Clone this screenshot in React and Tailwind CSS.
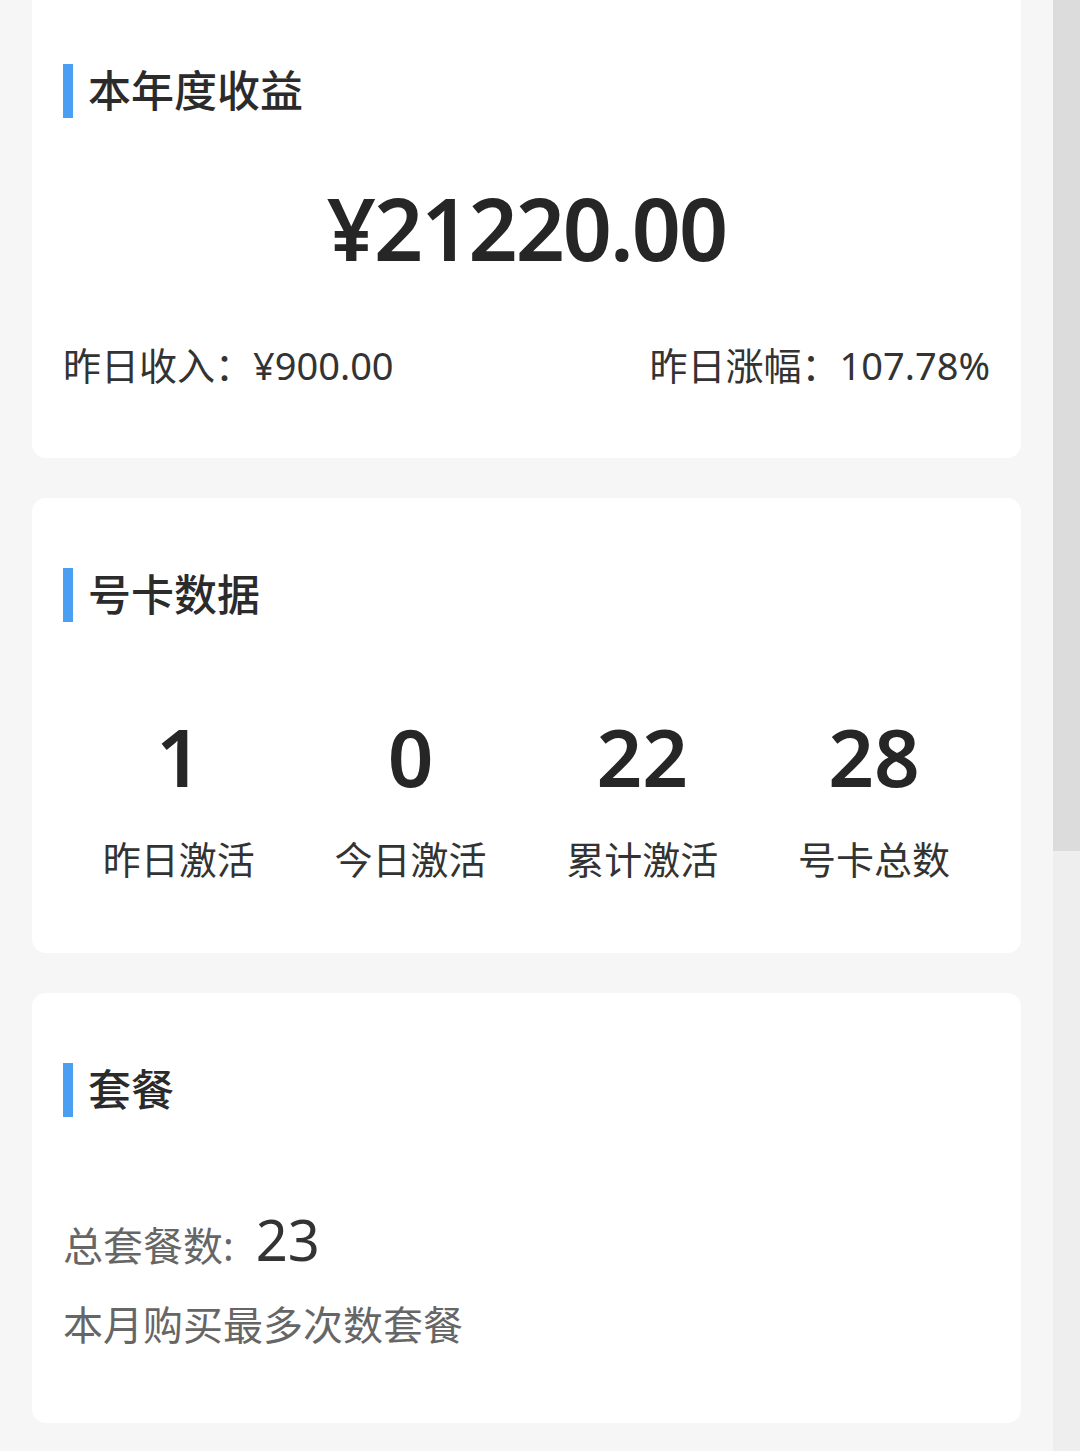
import React from "react";

const font = { fontFamily: '"Noto Sans", "Noto Sans CJK SC", sans-serif' };

function Title({ children }) {
  return (
    <div className="flex h-[54px] items-center">
      <div className="h-[54px] w-[10px] bg-[#4a9ff3]" />
      <div className="ml-[15px] text-[43px] leading-[54px] font-medium text-[#2b2b2b]">{children}</div>
    </div>
  );
}

export default function App() {
  const stats = [
    ["1", "昨日激活"],
    ["0", "今日激活"],
    ["22", "累计激活"],
    ["28", "号卡总数"],
  ];
  return (
    <div className="flex h-[1451px] w-[1080px] overflow-hidden bg-[#f6f6f6]" style={font}>
      <div className="flex w-[1053px] flex-col pl-[32px] pr-[32px]">
        {/* Card 1 */}
        <div className="flex w-[989px] flex-col rounded-b-[14px] bg-white px-[31px] pt-[64px] pb-[74px]">
          <Title>本年度收益</Title>
          <div className="mt-[67px] text-center text-[86px] leading-[86px] font-semibold tracking-[-2px] text-[#262626]">
            ¥21220.00
          </div>
          <div className="mt-[76px] flex justify-between text-[38px] leading-[37px] text-[#333333]">
            <span>昨日收入：¥900.00</span>
            <span>昨日涨幅：107.78%</span>
          </div>
        </div>

        {/* Card 2 */}
        <div className="mt-[40px] flex w-[989px] flex-col rounded-[14px] bg-white px-[31px] pt-[70px] pb-[75px]">
          <Title>号卡数据</Title>
          <div className="mt-[94px] grid grid-cols-4">
            {stats.map(([n, l]) => (
              <div key={l} className="flex flex-col items-center">
                <div className="text-[80px] leading-[80px] font-semibold text-[#262626]">{n}</div>
                <div className="mt-[44px] text-[38px] leading-[38px] text-[#333333]">{l}</div>
              </div>
            ))}
          </div>
        </div>

        {/* Card 3 */}
        <div className="mt-[40px] flex h-[430px] w-[989px] flex-col rounded-[14px] bg-white px-[31px] pt-[70px]">
          <Title>套餐</Title>
          <div className="mt-[94px] flex items-baseline">
            <span className="text-[40px] leading-[56px] text-[#666666]">总套餐数:</span>
            <span className="ml-[22px] text-[56px] leading-[56px] text-[#333333]">23</span>
          </div>
          <div className="mt-[32px] text-[40px] leading-[38px] text-[#666666]">本月购买最多次数套餐</div>
        </div>
      </div>
      {/* scrollbar */}
      <div className="flex w-[27px] flex-col bg-[#eeeeee]">
        <div className="h-[851px] w-full bg-[#dcdcdc]" />
      </div>
    </div>
  );
}
